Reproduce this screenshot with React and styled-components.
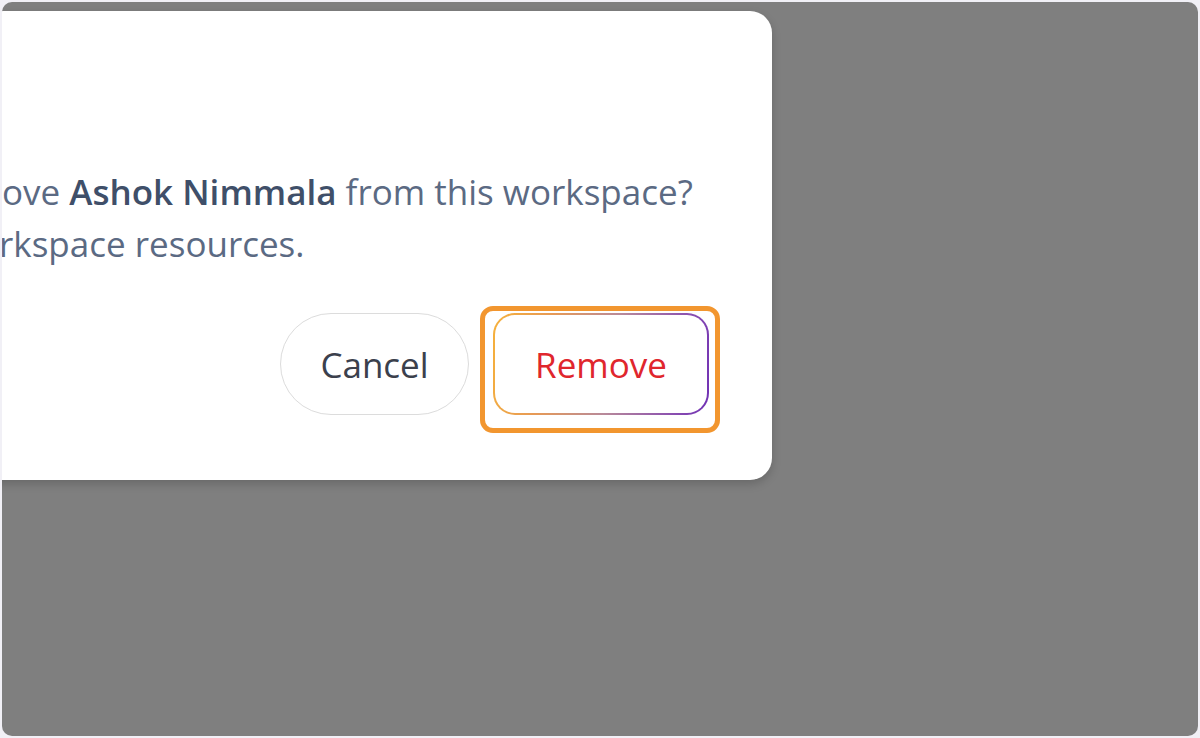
import React from "react";
import styled, { createGlobalStyle } from "styled-components";

const Global = createGlobalStyle`
  html, body { margin: 0; padding: 0; }
  body {
    background: #f1f0f6;
    font-family: "Open Sans", "Noto Sans", Arial, sans-serif;
    -webkit-font-smoothing: antialiased;
  }
  #root { width: 1200px; height: 738px; }
`;

const Frame = styled.div`
  box-sizing: border-box;
  margin: 2px;
  width: 1196px;
  height: 734px;
  background: #7f7f7f;
  border-radius: 10px;
  overflow: hidden;
  display: flex;
  align-items: flex-start;
`;

const Dialog = styled.div`
  box-sizing: border-box;
  flex: 0 0 auto;
  width: 1230px;
  height: 469px;
  margin: 9px 0 0 -460px;
  padding: 155px 63px 0 40px;
  background: #ffffff;
  border-radius: 22px;
  box-shadow: 0 4px 10px rgba(0, 0, 0, 0.18);
  display: flex;
  flex-direction: column;
`;

const Message = styled.div`
  font-size: 35px;
  line-height: 52px;
  color: #5b6a83;
`;

const Line = styled.div`
  display: flex;
  white-space: nowrap;
`;

const Lead = styled.span`
  flex: 0 0 auto;
  width: ${(p) => p.$w}px;
  display: flex;
  justify-content: flex-end;
  white-space: pre;
`;

const Name = styled.strong`
  font-weight: 600;
  color: #3f4f69;
`;

const Actions = styled.div`
  display: flex;
  justify-content: flex-end;
  gap: 24px;
  margin-top: 43px;
`;

const BaseButton = styled.button`
  box-sizing: border-box;
  height: 102px;
  font-family: "Open Sans", "Noto Sans", Arial, sans-serif;
  font-size: 35px;
  cursor: pointer;
  display: flex;
  align-items: center;
  justify-content: center;
  padding: 0;
`;

const CancelButton = styled(BaseButton)`
  width: 189px;
  border-radius: 51px;
  border: 1.5px solid #dcdcdc;
  background: #ffffff;
  color: #3b404c;
`;

const Highlight = styled.div`
  position: relative;
  display: flex;
`;

const Ring = styled.span`
  position: absolute;
  left: -13px;
  right: -11px;
  top: -7px;
  bottom: -18px;
  border: 5px solid #f2962f;
  border-radius: 13px;
  pointer-events: none;
`;

const RemoveButton = styled(BaseButton)`
  width: 216px;
  border-radius: 22px;
  border: 2px solid transparent;
  background:
    linear-gradient(#ffffff, #ffffff) padding-box,
    linear-gradient(100deg, #f6b13b 0%, #e79a55 25%, #b88a9a 55%, #8a4fb0 85%, #6f2fb4 100%) border-box;
  color: #e0262d;
`;

export default function App() {
  return (
    <>
      <Global />
      <Frame>
        <Dialog role="dialog" aria-modal="true">
          <Message>
            <Line>
              <Lead $w={420}>Are you sure you want to rem</Lead>
              <span>
                ove <Name>Ashok Nimmala</Name> from this workspace?
              </span>
            </Line>
            <Line>
              <Lead $w={417}>They will lose access to all wo</Lead>
              <span>rkspace resources.</span>
            </Line>
          </Message>
          <Actions>
            <CancelButton type="button">Cancel</CancelButton>
            <Highlight>
              <RemoveButton type="button">Remove</RemoveButton>
              <Ring />
            </Highlight>
          </Actions>
        </Dialog>
      </Frame>
    </>
  );
}
